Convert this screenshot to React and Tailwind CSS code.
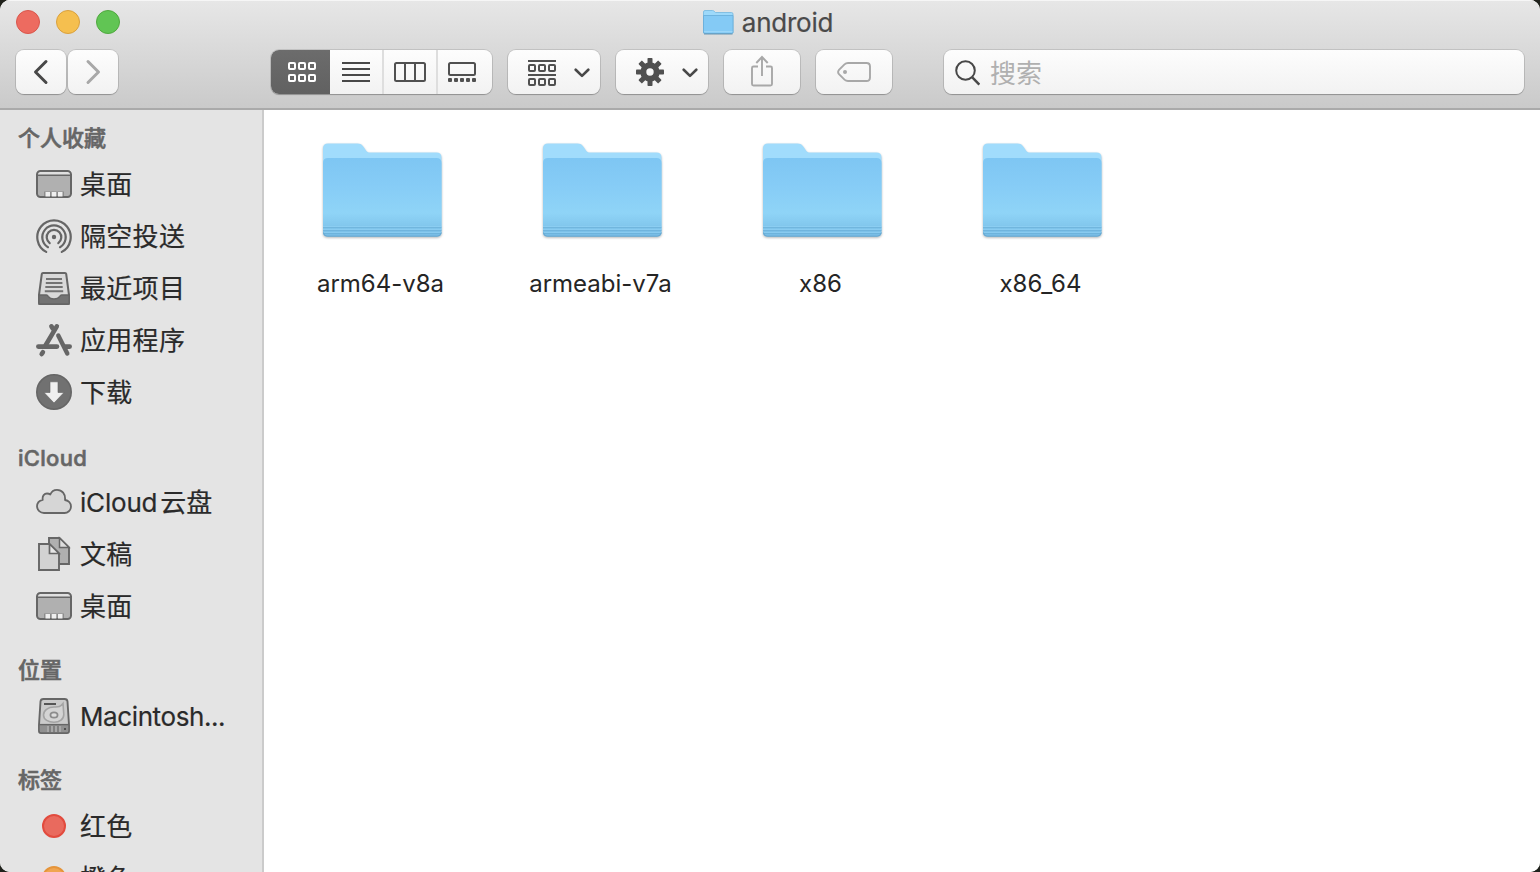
import React from "react";

const S = "#666666";

function DesktopIcon() {
  return (
    <svg width="36" height="36" viewBox="0 0 36 36" className="shrink-0">
      <rect x="1" y="5" width="34" height="26" rx="3.5" fill="#b0b0b0" />
      <path d="M1.5 9V8a3 3 0 0 1 3-3h27a3 3 0 0 1 3 3v1z" fill="#e0e0e0" />
      <rect x="1" y="5" width="34" height="26" rx="3.5" fill="none" stroke={S} strokeWidth="2" />
      <path d="M1 9.300h34" stroke={S} strokeWidth="1.600" />
      <path d="M8 30v-4.500h20V30z" fill="#8c8c8c" />
      <path d="M9.500 26h4.500v4.500H9.500zM15.700 26h4.600v4.500h-4.600zM22 26h4.500v4.500H22z" fill="#efefef" />
    </svg>
  );
}

function AirDropIcon() {
  return (
    <svg width="36" height="36" viewBox="0 0 36 36" className="shrink-0" fill="none" stroke={S} strokeWidth="2.200" strokeLinecap="round">
      <path d="M10.200 33.900a16.700 16.700 0 1 1 15.600 0" />
      <path d="M12 29.200a11.700 11.700 0 1 1 12 0" />
      <path d="M13.700 25.100a7.300 7.300 0 1 1 8.600 0" />
      <circle cx="18" cy="19" r="2.200" fill={S} stroke="none" />
    </svg>
  );
}

function RecentsIcon() {
  return (
    <svg width="36" height="36" viewBox="0 0 36 36" className="shrink-0">
      <path d="M7 3h22q1 0 1.200 1L33 25v8q0 1-1 1H4q-1 0-1-1v-8L5.800 4Q6 3 7 3z" fill="#d9d9d9" stroke={S} strokeWidth="2" strokeLinejoin="round" />
      <path d="M3 25h7.500q1 0 1.700 1.300Q14 29 18 29t5.800-2.700Q24.500 25 25.500 25H33v9H3z" fill="#737373" stroke={S} strokeWidth="1.400" />
      <path d="M10 9h16M9.800 13h16.600M9.300 17h17.400M8.800 21.200h18.400" stroke="#737373" strokeWidth="1.900" />
    </svg>
  );
}

function AppsIcon() {
  return (
    <svg width="36" height="36" viewBox="0 0 36 36" className="shrink-0" fill="none" stroke={S} strokeWidth="4.600" strokeLinecap="round">
      <path d="M2.300 24.600H21" />
      <path d="M15.400 4.300l1.200 2" />
      <path d="M20.800 4.300L9.500 23.500" />
      <path d="M21.800 13l9 18.800" stroke="#e4e4e4" strokeWidth="5.800" strokeLinecap="butt" />
      <path d="M22.300 13.500l9 18" strokeWidth="4.400" />
      <path d="M29.500 24.600h4.200" />
      <path d="M6.900 30.200l-1.200 1.800" />
    </svg>
  );
}

function DownloadsIcon() {
  return (
    <svg width="36" height="36" viewBox="0 0 36 36" className="shrink-0">
      <circle cx="18" cy="18" r="17.200" fill="#717171" stroke={S} strokeWidth="1.600" />
      <path d="M14 7.800h8v10.700h6L18 29 8 18.500h6z" fill="#f0f0f0" stroke="#616161" strokeWidth="0.600" />
    </svg>
  );
}

function CloudIcon() {
  return (
    <svg width="36" height="36" viewBox="0 0 36 36" className="shrink-0">
      <path
        d="M8 29A7 7 0 0 1 1 22.400c0-3.300 2.300-5.800 5.700-6.600C6 11.800 8.500 9.500 11 9.500q2 0 3.300 1C15.500 7.500 18 5.800 21 5.800c5 0 8.700 4.200 8 10.200 3.500.500 6 3.200 6 6.500a6.600 6.600 0 0 1-7 6.500z"
        fill="#d6d6d6" stroke={S} strokeWidth="1.800" strokeLinejoin="round"
      />
    </svg>
  );
}

function DocumentsIcon() {
  return (
    <svg width="36" height="36" viewBox="0 0 36 36" className="shrink-0" strokeWidth="1.900" stroke={S}>
      <path d="M13 2h10.500L33 11.500V28H13z" fill="#b0b0b0" />
      <path d="M23.500 2v9.500H33z" fill="#dedede" strokeWidth="1.500" />
      <path d="M3 8h10.500L23 17.500V34H3z" fill="#d2d2d2" />
      <path d="M13.500 8v9.500H23z" fill="#e6e6e6" strokeWidth="1.700" />
    </svg>
  );
}

function DiskIcon() {
  return (
    <svg width="36" height="36" viewBox="0 0 36 36" className="shrink-0">
      <path d="M7.500 1h21q2.800 0 3 2.500L33 27v6q0 2-2 2H5q-2 0-2-2v-6L4.500 3.500Q4.700 1 7.500 1z" fill="#cbcbcb" stroke={S} strokeWidth="1.900" />
      <path d="M3.800 27h28.400v6q0 1.300-1.500 1.300H5.300q-1.500 0-1.500-1.300z" fill="#909090" />
      <path d="M3 26.600h30" stroke={S} strokeWidth="1.400" />
      <path d="M12 28v6M16 28v6M20 28v6M24 28v6" stroke="#b5b5b5" strokeWidth="1.300" />
      <path d="M14 28v6M18 28v6M22 28v6" stroke="#727272" strokeWidth="1" />
      <rect x="28" y="30" width="2" height="2" fill="#505050" />
      <path d="M8 6h12" stroke="#555" strokeWidth="2" />
      <path d="M27 5.500l.8 11c0 4.500-4.300 7.800-9.800 7.800S7.500 21.600 7.500 17 12 9 18 9c4 0 6 .500 9-3.500z" fill="#d4d4d4" stroke="#a4a4a4" strokeWidth="1.600" />
      <ellipse cx="18" cy="17" rx="3.600" ry="2.700" fill="#ddd" stroke="#8c8c8c" strokeWidth="1.700" />
    </svg>
  );
}

function TagDot({ red }) {
  return (
    <span className="flex w-9 shrink-0 justify-center">
      <span className={red ? "size-6 rounded-full border-2 border-[#e24b3e] bg-[#e96a5e]" : "size-6 rounded-full border-2 border-[#e5943a] bg-[#f0a550]"} />
    </span>
  );
}

function Section({ title, first, children }) {
  return (
    <section>
      <h2 className={first
        ? "flex h-12 items-center pt-2 pl-[18px] text-[22px] leading-[30px] font-medium text-[#666666] [-webkit-text-stroke:0.6px_#666666]"
        : "flex h-[58px] items-center pt-[22px] pl-[18px] text-[22px] leading-[30px] font-medium text-[#666666] [-webkit-text-stroke:0.6px_#666666]"}>
        {title}
      </h2>
      {children}
    </section>
  );
}

function Item({ icon, children }) {
  return (
    <div className="flex h-[52px] items-center gap-2 pl-9 text-[26px] leading-[36px] whitespace-nowrap text-[#2a2a2a]">
      {icon}
      <span className="flex items-center pt-0.5 tracking-[0.3px] [-webkit-text-stroke:0.2px_#2a2a2a]">{children}</span>
    </div>
  );
}

function Folder({ name }) {
  const id = "front-" + name;
  return (
    <div className="flex w-[220px] flex-col items-center">
      <svg width="128" height="104" viewBox="0 0 128 104" className="ml-0.5 drop-shadow-[0_1px_1px_rgba(0,0,0,0.28)]">
        <defs>
          <linearGradient id={id} x1="0" y1="0" x2="0" y2="1">
            <stop offset="0" stopColor="#7ec6f3" />
            <stop offset="0.350" stopColor="#86ccf6" />
            <stop offset="0.700" stopColor="#8fd4f7" />
            <stop offset="0.850" stopColor="#83c8ee" />
            <stop offset="1" stopColor="#76bbe4" />
          </linearGradient>
        </defs>
        <g transform="translate(0.500 0)">
          <path d="M4.500 92V9.500q0-5 5-5h29.500c3 0 4.500 1 6.200 3.500l2 3c1.300 1.900 2.200 2.500 4.800 2.500h66q5 0 5 5v73z" fill="#a1dcfc" />
          <path d="M4.500 24q0-5 5-5h108.500q5 0 5 5V93.500q0 4-4 4H8.500q-4 0-4-4z" fill={"url(#" + id + ")"} />
          <path d="M4.500 88.500H123M4.500 91.500H123M4.500 94.500H123" stroke="#65a9d4" strokeOpacity="0.550" strokeWidth="1" />
          <path d="M4.500 87.500H123M4.500 90.500H123M4.500 93.500H123" stroke="#93d2f5" strokeOpacity="0.600" strokeWidth="1" />
          <path d="M5 93.500q.3 3.700 3.700 3.700h110q3.500 0 4-3.700" fill="none" stroke="#68a8d0" strokeWidth="1" />
        </g>
      </svg>
      <span className="mt-[25px] h-8 pr-px text-[24px] leading-8 text-[#252525]">{name}</span>
    </div>
  );
}

const BTN = "flex items-center justify-center rounded-[8px] bg-linear-to-b from-[#fdfdfd] to-[#f2f2f2] shadow-[0_0_0_1px_rgba(0,0,0,0.11),0_1px_1px_rgba(0,0,0,0.2)]";

function Chevron() {
  return (
    <svg width="16" height="10" viewBox="0 0 16 10" fill="none" stroke="#484848" strokeWidth="2.600" strokeLinecap="round" strokeLinejoin="round" className="mt-px">
      <path d="M1.700 1.700L8 7.900l6.300-6.200" />
    </svg>
  );
}

function GridCells({ y }) {
  return (
    <>
      <rect x="1" y={y} width="6" height="6" rx="1" />
      <rect x="11" y={y} width="6" height="6" rx="1" />
      <rect x="21" y={y} width="6" height="6" rx="1" />
    </>
  );
}

const TEETH = [0, 45, 90, 135, 180, 225, 270, 315];

export default function App() {
  return (
    <div className="h-[872px] w-[1540px] overflow-hidden bg-[#20221c] font-['Inter','Noto_Sans_CJK_SC',sans-serif]">
      <div className="flex h-full flex-col overflow-hidden rounded-[10px] bg-white">
        <header className="flex h-[110px] shrink-0 flex-col border-b-2 border-[#aaaaaa] bg-linear-to-b from-[#e7e7e7] to-[#cacaca] shadow-[inset_0_1px_0_#f6f6f6]">
          <div className="grid h-11 grid-cols-[1fr_auto_1fr] items-center">
            <div className="flex gap-4 pl-4">
              <span className="size-6 rounded-full border border-[#d9564c] bg-[#ed6b60]" />
              <span className="size-6 rounded-full border border-[#d9a03e] bg-[#f5bf4f]" />
              <span className="size-6 rounded-full border border-[#50a83f] bg-[#61c554]" />
            </div>
            <div className="flex items-center gap-2 pr-[5px]">
              <svg width="32" height="26" viewBox="0 0 32 26">
                <path d="M1.500 24V3q0-1.500 1.500-1.500h7.500q1 0 1.700.800l1.300 1.200H29.500q1.500 0 1.500 1.500v19z" fill="#9dd9fa" stroke="#74b8df" strokeWidth="0.800" />
                <path d="M1.500 6.500H31V23q0 1.500-1.500 1.500H3q-1.500 0-1.500-1.500z" fill="#84caf5" stroke="#67acd8" strokeWidth="0.800" />
                <path d="M2 22.700h28.500" stroke="#a7dcfa" strokeWidth="0.800" />
                <path d="M2 25h28.500" stroke="#5b8eae" strokeWidth="0.900" />
              </svg>
              <h1 className="pt-0.5 text-[26px] leading-8 tracking-[-0.25px] text-[#4a4a4a] [-webkit-text-stroke:0.2px_#4a4a4a]">android</h1>
            </div>
            <div />
          </div>
          <div className="flex h-14 items-center pr-4 pl-4">
            <div className="flex gap-0.5">
              <button className={BTN + " h-11 w-[50px]"}>
                <svg width="16" height="26" viewBox="0 0 16 26" fill="none" stroke="#484848" strokeWidth="3" strokeLinecap="round" strokeLinejoin="round"><path d="M13 2.500L2.500 13 13 23.500" /></svg>
              </button>
              <button className={BTN + " h-11 w-[50px]"}>
                <svg width="16" height="26" viewBox="0 0 16 26" fill="none" stroke="#a8a8a8" strokeWidth="3" strokeLinecap="round" strokeLinejoin="round"><path d="M3 2.500L13.500 13 3 23.500" /></svg>
              </button>
            </div>
            <div className={BTN + " ml-[153px] h-11 w-[221px] overflow-hidden"}>
              <div className="flex h-full w-[59px] items-center justify-center bg-linear-to-b from-[#6c6c6c] to-[#616161]">
                <svg width="28" height="20" viewBox="0 0 28 20" fill="none" stroke="white" strokeWidth="2" className="ml-[3px]"><GridCells y={1} /><GridCells y={13} /></svg>
              </div>
              <div className="flex h-full w-[54px] items-center justify-center border-r-2 border-[#dedede]">
                <svg width="28" height="20" viewBox="0 0 28 20" stroke="#484848" strokeWidth="2"><path d="M0 1h28M0 7h28M0 13h28M0 19h28" /></svg>
              </div>
              <div className="flex h-full w-[54px] items-center justify-center border-r-2 border-[#dedede]">
                <svg width="32" height="20" viewBox="0 0 32 20" fill="none" stroke="#505050" strokeWidth="2"><rect x="1" y="1" width="30" height="18" rx="1.500" /><path d="M11 1v18M21 1v18" /></svg>
              </div>
              <div className="flex h-full w-[54px] items-center justify-center pr-[6px]">
                <svg width="28" height="20" viewBox="0 0 28 20" fill="none" stroke="#505050" strokeWidth="2">
                  <rect x="1" y="1" width="26" height="12" rx="1.500" />
                  <g fill="#505050" stroke="none">
                    <rect x="0" y="16" width="4" height="4" rx="1" /><rect x="6" y="16" width="4" height="4" rx="1" /><rect x="12" y="16" width="4" height="4" rx="1" /><rect x="18" y="16" width="4" height="4" rx="1" /><rect x="24" y="16" width="4" height="4" rx="1" />
                  </g>
                </svg>
              </div>
            </div>
            <button className={BTN + " ml-4 h-11 w-[92px] gap-[18px] pl-[10px]"}>
              <svg width="28" height="26" viewBox="0 0 28 26" fill="none" stroke="#505050" strokeWidth="2" className="mt-0.5"><path d="M0 1h28M0 15h28" /><GridCells y={5} /><GridCells y={19} /></svg>
              <Chevron />
            </button>
            <button className={BTN + " ml-4 h-11 w-[92px] gap-[18px] pl-[10px]"}>
              <svg width="28" height="28" viewBox="0 0 28 28" fill="#505050">
                {TEETH.map((a) => <rect key={a} x="11.500" y="0" width="5" height="8" rx="0.800" transform={`rotate(${a} 14 14)`} />)}
                <circle cx="14" cy="14" r="6.700" fill="none" stroke="#505050" strokeWidth="6" />
              </svg>
              <Chevron />
            </button>
            <button className={BTN + " ml-4 h-11 w-[76px]"}>
              <svg width="24" height="32" viewBox="0 0 24 32" fill="none" stroke="#a8a8a8" strokeWidth="1.900" className="mb-0.5"><path d="M8 11.500H3.500Q2 11.500 2 13v16q0 1.500 1.500 1.500h17q1.500 0 1.500-1.500V13q0-1.500-1.500-1.500H16M12 21V2M6.300 8L12 2l5.700 6" /></svg>
            </button>
            <button className={BTN + " ml-4 h-11 w-[76px]"}>
              <svg width="34" height="20" viewBox="0 0 34 20" fill="none" stroke="#a8a8a8" strokeWidth="1.900"><path d="M11 1h18.500q3.500 0 3.500 3.500v11q0 3.500-3.500 3.500H11q-2 0-3.500-1.400L2 12.200Q.2 10 2 7.800L7.500 2.400Q9 1 11 1z" /><circle cx="8" cy="10" r="2" fill="#a8a8a8" stroke="none" /></svg>
            </button>
            <div className={BTN + " ml-[52px] h-11 w-[580px] justify-start gap-2.5 pl-[11px]"}>
              <svg width="25" height="26" viewBox="0 0 25 26" fill="none" stroke="#484848" strokeWidth="2" className="mt-0.5"><circle cx="10.500" cy="10.500" r="9.300" /><path d="M17.300 17.300l7 7.300" strokeWidth="2.400" /></svg>
              <span className="pt-[3px] text-[26px] leading-9 text-[#b0b0b0]">搜索</span>
            </div>
          </div>
        </header>
        <div className="flex min-h-0 flex-1">
          <aside className="w-[264px] shrink-0 overflow-hidden border-r-2 border-[#cbcbcb] bg-[#e4e4e4]">
            <Section title="个人收藏" first>
              <Item icon={<DesktopIcon />}>桌面</Item>
              <Item icon={<AirDropIcon />}>隔空投送</Item>
              <Item icon={<RecentsIcon />}>最近项目</Item>
              <Item icon={<AppsIcon />}>应用程序</Item>
              <Item icon={<DownloadsIcon />}>下载</Item>
            </Section>
            <Section title={<span className="tracking-[0.3px]">iCloud</span>}>
              <Item icon={<CloudIcon />}><span className="tracking-[-0.2px]">iCloud</span><span className="ml-[3px] tracking-normal">云盘</span></Item>
              <Item icon={<DocumentsIcon />}>文稿</Item>
              <Item icon={<DesktopIcon />}>桌面</Item>
            </Section>
            <Section title={<span className="pb-1">位置</span>}>
              <Item icon={<DiskIcon />}><span className="tracking-[-0.4px]">Macintosh...</span></Item>
            </Section>
            <Section title={<span className="pb-1">标签</span>}>
              <Item icon={<TagDot red />}>红色</Item>
              <Item icon={<TagDot />}>橙色</Item>
            </Section>
          </aside>
          <main className="flex flex-1 items-start bg-white pt-[29px] pl-[7px]">
            <Folder name="arm64-v8a" />
            <Folder name="armeabi-v7a" />
            <Folder name="x86" />
            <Folder name="x86_64" />
          </main>
        </div>
      </div>
    </div>
  );
}
